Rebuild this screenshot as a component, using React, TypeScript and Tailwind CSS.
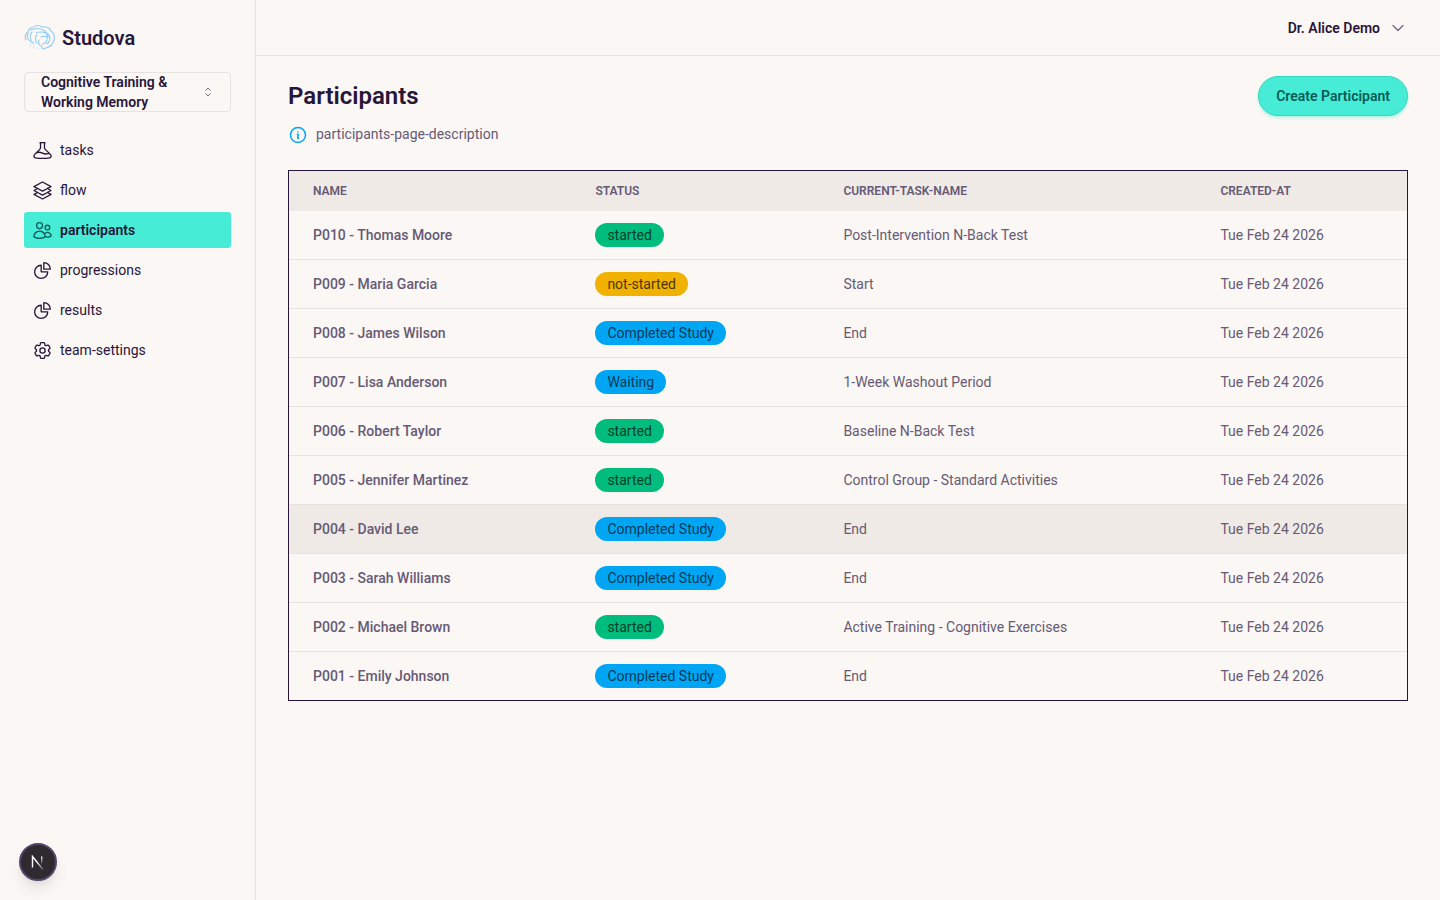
import React from "react";
import { HiOutlineBeaker, HiOutlineSquare3Stack3D, HiOutlineUsers, HiOutlineChartPie, HiOutlineCog6Tooth, HiOutlineInformationCircle, HiOutlineChevronDown, HiOutlineChevronUpDown } from "react-icons/hi2";

const rows: [string, string, string][] = [
  ["P010 - Thomas Moore", "started", "Post-Intervention N-Back Test"],
  ["P009 - Maria Garcia", "not-started", "Start"],
  ["P008 - James Wilson", "Completed Study", "End"],
  ["P007 - Lisa Anderson", "Waiting", "1-Week Washout Period"],
  ["P006 - Robert Taylor", "started", "Baseline N-Back Test"],
  ["P005 - Jennifer Martinez", "started", "Control Group - Standard Activities"],
  ["P004 - David Lee", "Completed Study", "End"],
  ["P003 - Sarah Williams", "Completed Study", "End"],
  ["P002 - Michael Brown", "started", "Active Training - Cognitive Exercises"],
  ["P001 - Emily Johnson", "Completed Study", "End"],
];

const nav = [
  { label: "tasks", Icon: HiOutlineBeaker },
  { label: "flow", Icon: HiOutlineSquare3Stack3D },
  { label: "participants", Icon: HiOutlineUsers, active: true },
  { label: "progressions", Icon: HiOutlineChartPie },
  { label: "results", Icon: HiOutlineChartPie },
  { label: "team-settings", Icon: HiOutlineCog6Tooth },
];

function badgeClass(s: string) {
  if (s === "started") return "bg-[#00bc7d] text-[#00402b]";
  if (s === "not-started") return "bg-[#f0b100] text-[#4d3800]";
  return "bg-[#00a6f4] text-[#003a57]";
}

function Brain() {
  return (
    <svg width="32" height="28" viewBox="0 0 32 28" fill="none" stroke="#8fcdf5" strokeWidth="1.1" strokeLinecap="round">
      <path d="M2 16C0 13 2 9 4 8c0-3 3-5 6-5 2-2 6-2 8 0 4-1 8 1 9 4 3 2 4 6 3 9-1 4-4 7-8 8l-3 1-2-3c-2-1-3-3-2-6" />
      <path d="M6 6c5-2 11-2 15 1 2 2 3 5 2 8" />
      <path d="M12 9c4-2 10-1 13 2 2 3 1 7-2 9" />
      <path d="M4 9c-1 3-1 6 1 7 2 1 3 3 5 3" />
      <path d="M8 8c-2 2-2 5-1 8M13 11c-2 2-2 5 0 8" />
      <path d="M17 13c3-1 5-1 8 0M18 20c2 0 4-1 5-4" />
      <path d="M6 20l1 1M9 23l1 1M13 24l1 1M10 21l1 0M5 23l1 0" stroke="#cfe8fa" />
    </svg>
  );
}

export default function App() {
  return (
    <div className="flex min-h-[900px] bg-[#fbf7f4] text-[#28153a] font-['Roboto',sans-serif] text-sm antialiased">
      <aside className="relative w-[256px] shrink-0 border-r border-[#e6e2df] px-6">
        <div className="flex h-[72px] items-center gap-[6px] pt-1">
          <Brain />
          <span className="text-[20px] font-semibold leading-7">Studova</span>
        </div>
        <button className="flex h-10 w-full items-center justify-between rounded border border-[#e6e2df] pl-4 pr-[14px] text-left font-semibold leading-5">
          <span className="w-[150px]">Cognitive Training &amp; Working Memory</span>
          <HiOutlineChevronUpDown className="mr-[1px] size-[14px] text-[#5c4e6b]" />
        </button>
        <nav className="mt-5 flex flex-col gap-1">
          {nav.map(({ label, Icon, active }) => (
            <div key={label} className={`flex h-9 items-center gap-[7.5px] rounded-[3px] pl-[7.5px] ${active ? "bg-[#46ecd5] font-semibold" : ""}`}>
              <Icon className={`size-[21px] stroke-[1.5] ${active ? "text-[#0c5c5a]" : ""}`} />
              <span>{label}</span>
            </div>
          ))}
        </nav>
        <div className="absolute bottom-[19px] left-[19px] flex size-[38px] items-center justify-center rounded-full border-2 border-[#54456a] bg-[#2e2a30] shadow-lg">
          <svg width="18" height="18" viewBox="0 0 18 18" fill="none">
            <defs>
              <linearGradient id="nfade" x1="0" y1="0" x2="1" y2="1">
                <stop offset="0.4" stopColor="#ffffff" />
                <stop offset="1" stopColor="#ffffff" stopOpacity="0.2" />
              </linearGradient>
              <linearGradient id="nfade2" x1="0" y1="0" x2="0" y2="1">
                <stop offset="0" stopColor="#ffffff" />
                <stop offset="1" stopColor="#ffffff" stopOpacity="0" />
              </linearGradient>
            </defs>
            <path d="M3.5 14.5V3.5L14 16.5" stroke="url(#nfade)" strokeWidth="1.4" />
            <rect x="12" y="3.5" width="1.4" height="8" fill="url(#nfade2)" />
          </svg>
        </div>
      </aside>
      <div className="flex min-w-0 flex-1 flex-col">
        <header className="flex h-[56px] items-center justify-end border-b border-[#e6e2df] pr-[34px]">
          <span className="font-semibold">Dr. Alice Demo</span>
          <HiOutlineChevronDown className="ml-[10px] size-[16px] stroke-[1.8] text-[#6f6280]" />
        </header>
        <main className="px-8 pt-5">
          <div className="flex items-center justify-between">
            <h1 className="text-2xl font-semibold leading-10">Participants</h1>
            <button className="h-10 rounded-full border border-[#38d6bc] bg-[#46ecd5] px-[17px] font-semibold text-[#0b5c58] shadow-[0_2px_3px_rgba(67,237,210,0.4)]">Create Participant</button>
          </div>
          <div className="mt-[6px] flex items-center gap-[8px] text-[#665a74]">
            <HiOutlineInformationCircle className="mt-[3px] size-5 stroke-[1.8] text-[#00a6f4]" />
            <span className="leading-5">participants-page-description</span>
          </div>
          <div className="mt-[25px] border border-[#28153a]">
            <table className="w-full table-fixed border-separate border-spacing-0">
              <colgroup>
                <col className="w-[282.4px]" />
                <col className="w-[248px]" />
                <col className="w-[377px]" />
                <col />
              </colgroup>
              <thead>
                <tr className="h-10 bg-[#efeae6] text-left text-xs font-semibold uppercase text-[#665a74]">
                  {["Name", "Status", "current-task-name", "created-at"].map((h) => (
                    <th key={h} className="px-6 font-semibold">{h}</th>
                  ))}
                </tr>
              </thead>
              <tbody className="text-[#665a74]">
                {rows.map(([name, status, task], i) => {
                  const last = i === rows.length - 1;
                  const cell = `px-6 border-[#e6e2df] ${last ? "h-[48px]" : "h-[49px] border-b"}`;
                  return (
                    <tr key={name} className={name.startsWith("P004") ? "bg-[#efeae6]" : ""}>
                      <td className={`${cell} font-medium`}>{name}</td>
                      <td className={cell}>
                        <span className={`inline-block rounded-full px-3 leading-6 ${badgeClass(status)}`}>{status}</span>
                      </td>
                      <td className={cell}>{task}</td>
                      <td className={cell}>Tue Feb 24 2026</td>
                    </tr>
                  );
                })}
              </tbody>
            </table>
          </div>
        </main>
      </div>
    </div>
  );
}
